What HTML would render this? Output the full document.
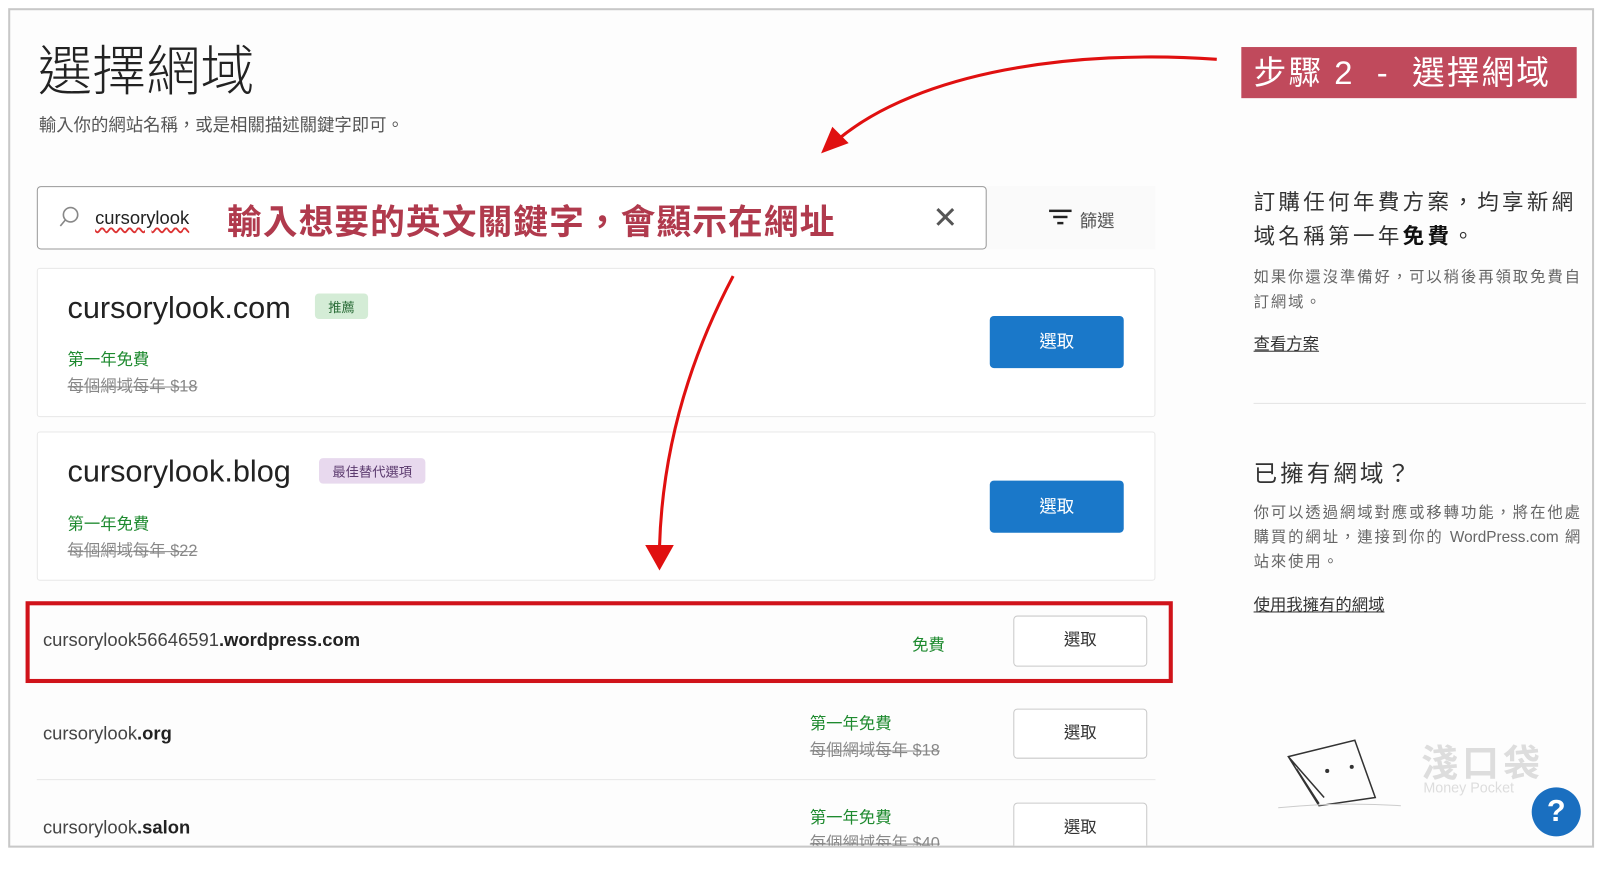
<!DOCTYPE html>
<html><head><meta charset="utf-8"><style>
*{margin:0;padding:0;box-sizing:border-box}
body{width:1601px;height:859px;background:#fff;position:relative;overflow:hidden;font-family:"Liberation Sans","Noto Sans CJK TC",sans-serif;color:#1d2327}
#w{position:absolute;left:0;top:0;width:1601px;height:859px;transform:scale(1.0225);transform-origin:0 0}
.frame{position:absolute;left:8px;top:8px;width:1551px;height:821px;border:2px solid #c8c8c8;background:#fdfdfd;overflow:hidden}
.a{position:absolute}
.card{position:absolute;left:26px;width:1094px;background:#fff;border:1px solid #e8e8e8;border-radius:3px}
.btnb{position:absolute;background:#1a78c9;color:#fff;border-radius:4px;font-size:17px;text-align:center}
.btnw{position:absolute;background:#fff;border:1px solid #c9c9c9;border-radius:4px;font-size:16px;text-align:center;color:#333}
.g{color:#1e8a2f;font-size:16px}
.s{color:#888;font-size:16px;text-decoration:line-through}
</style></head><body><div id="w">
<div class="frame">
<div class="a" style="left:27px;top:18px;font-size:53px;color:#222;font-weight:300">選擇網域</div>
<div class="a" style="left:28px;top:98px;font-size:17px;color:#555">輸入你的網站名稱，或是相關描述關鍵字即可。</div>
<div class="a" style="left:26px;top:172px;width:1094px;height:62px;background:#fafafa"></div>
<div class="a" style="left:26px;top:172px;width:929px;height:62px;border:1.5px solid #999;border-radius:4px;background:#fff"></div>
<svg class="a" style="left:46px;top:190px" width="24" height="24"><circle cx="13" cy="10" r="7" fill="none" stroke="#888" stroke-width="1.6"/><line x1="8" y1="15" x2="3" y2="21" stroke="#888" stroke-width="1.6"/></svg>
<div class="a" style="left:83px;top:193px;font-size:18px;color:#222;text-decoration:underline wavy #d33;text-underline-offset:3px">cursorylook</div>
<div class="a" style="left:212px;top:180px;font-size:34px;color:#b03a4d;font-weight:bold;letter-spacing:1px">輸入想要的英文關鍵字，會顯示在網址</div>
<div class="a" style="left:902px;top:186px;font-size:30px;color:#555;font-weight:200">✕</div>
<svg class="a" style="left:1015px;top:193px" width="24" height="18"><rect x="1" y="2" width="22" height="2.4" fill="#222"/><rect x="5" y="8" width="14" height="2.4" fill="#222"/><rect x="9" y="14" width="6" height="2.4" fill="#222"/></svg>
<div class="a" style="left:1046px;top:192px;font-size:17px;color:#555">篩選</div>

<div class="card" style="top:252px;height:146px">
<div class="a" style="left:29px;top:22px;font-size:30px;color:#222">cursorylook.com</div>
<div class="a" style="left:271px;top:24px;background:#d4ecd6;color:#2c6e39;font-size:13px;padding:3px 13px;border-radius:4px">推薦</div>
<div class="a g" style="left:29px;top:75px">第一年免費</div>
<div class="a s" style="left:29px;top:101px">每個網域每年 $18</div>
</div>
<div class="btnb" style="left:958px;top:299px;width:131px;height:51px;line-height:51px">選取</div>

<div class="card" style="top:412px;height:146px">
<div class="a" style="left:29px;top:22px;font-size:30px;color:#222">cursorylook.blog</div>
<div class="a" style="left:275px;top:25px;background:#e8d9ee;color:#5b3a6e;font-size:13px;padding:3px 13px;border-radius:4px">最佳替代選項</div>
<div class="a g" style="left:29px;top:76px">第一年免費</div>
<div class="a s" style="left:29px;top:102px">每個網域每年 $22</div>
</div>
<div class="btnb" style="left:958px;top:460px;width:131px;height:51px;line-height:51px">選取</div>

<div class="a" style="left:15px;top:578px;width:1122px;height:80px;border:4px solid #d0131a"></div>
<div class="a" style="left:32px;top:606px;font-size:18px;color:#444">cursorylook56646591<b style="color:#222;font-weight:600">.wordpress.com</b></div>
<div class="a g" style="left:882px;top:607px">免費</div>
<div class="btnw" style="left:981px;top:592px;width:131px;height:50px;line-height:48px">選取</div>

<div class="a" style="left:32px;top:697px;font-size:18px;color:#444">cursorylook<b style="color:#222;font-weight:600">.org</b></div>
<div class="a g" style="left:782px;top:684px">第一年免費</div>
<div class="a s" style="left:782px;top:710px">每個網域每年 $18</div>
<div class="btnw" style="left:981px;top:683px;width:131px;height:49px;line-height:47px">選取</div>
<div class="a" style="left:26px;top:752px;width:1094px;height:1px;background:#e6e6e6"></div>

<div class="a" style="left:32px;top:789px;font-size:18px;color:#444">cursorylook<b style="color:#222;font-weight:600">.salon</b></div>
<div class="a g" style="left:782px;top:776px">第一年免費</div>
<div class="a s" style="left:782px;top:801px">每個網域每年 $40</div>
<div class="btnw" style="left:981px;top:775px;width:131px;height:49px;line-height:47px">選取</div>

<div class="a" style="left:1204px;top:36px;width:328px;height:50px;background:#c04a5c;color:#fff;font-size:32px;line-height:50px;padding-left:12px;letter-spacing:2px">步驟 2 &nbsp;- &nbsp;選擇網域</div>

<div class="a" style="left:1216px;top:172px;width:335px;font-size:21px;line-height:33px;color:#333;letter-spacing:3.3px">訂購任何年費方案，均享新網域名稱第一年<b style="color:#111">免費</b>。</div>
<div class="a" style="left:1216px;top:250px;width:335px;font-size:15px;line-height:24px;color:#666;letter-spacing:1.9px">如果你還沒準備好，可以稍後再領取免費自訂網域。</div>
<div class="a" style="left:1216px;top:313px;font-size:16px;color:#333;text-decoration:underline">查看方案</div>
<div class="a" style="left:1216px;top:384px;width:325px;height:1px;background:#e3e3e3"></div>
<div class="a" style="left:1216px;top:434px;font-size:23px;color:#333;letter-spacing:3px">已擁有網域？</div>
<div class="a" style="left:1216px;top:480px;width:335px;font-size:15px;line-height:24px;color:#666;letter-spacing:1.9px">你可以透過網域對應或移轉功能，將在他處購買的網址，連接到你的 <span style="letter-spacing:0">WordPress.com</span> 網站來使用。</div>
<div class="a" style="left:1216px;top:568px;font-size:16px;color:#333;text-decoration:underline">使用我擁有的網域</div>

<svg class="a" style="left:1240px;top:700px" width="130" height="100"><path d="M10 30 L75 14 L95 70 L40 78 Z M10 30 L45 70 M18 42 L40 76" fill="none" stroke="#333" stroke-width="1.5"/><circle cx="48" cy="44" r="2" fill="#333"/><circle cx="72" cy="40" r="2" fill="#333"/><path d="M0 80 Q60 74 120 78" stroke="#ccc" fill="none"/></svg>
<div class="a" style="left:1380px;top:708px;font-size:36px;color:#ddd;font-weight:bold;letter-spacing:4px">淺口袋</div>
<div class="a" style="left:1382px;top:752px;font-size:14px;color:#ddd">Money Pocket</div>
<div class="a" style="left:1488px;top:760px;width:48px;height:48px;border-radius:50%;background:#1a6fc0;color:#fff;font-size:30px;font-weight:bold;text-align:center;line-height:48px">?</div>
</div>

<svg class="a" style="left:0;top:0" width="1601" height="859">
<path d="M1190 58 C1050 48 900 70 820 136" fill="none" stroke="#e01010" stroke-width="3"/>
<polygon points="803,150 814,124 830,140" fill="#e01010"/>
<path d="M717 270 C680 340 648 430 645 535" fill="none" stroke="#e01010" stroke-width="3"/>
<polygon points="631,533 659,533 645,558" fill="#e01010"/>
</svg>
</div></body></html>
